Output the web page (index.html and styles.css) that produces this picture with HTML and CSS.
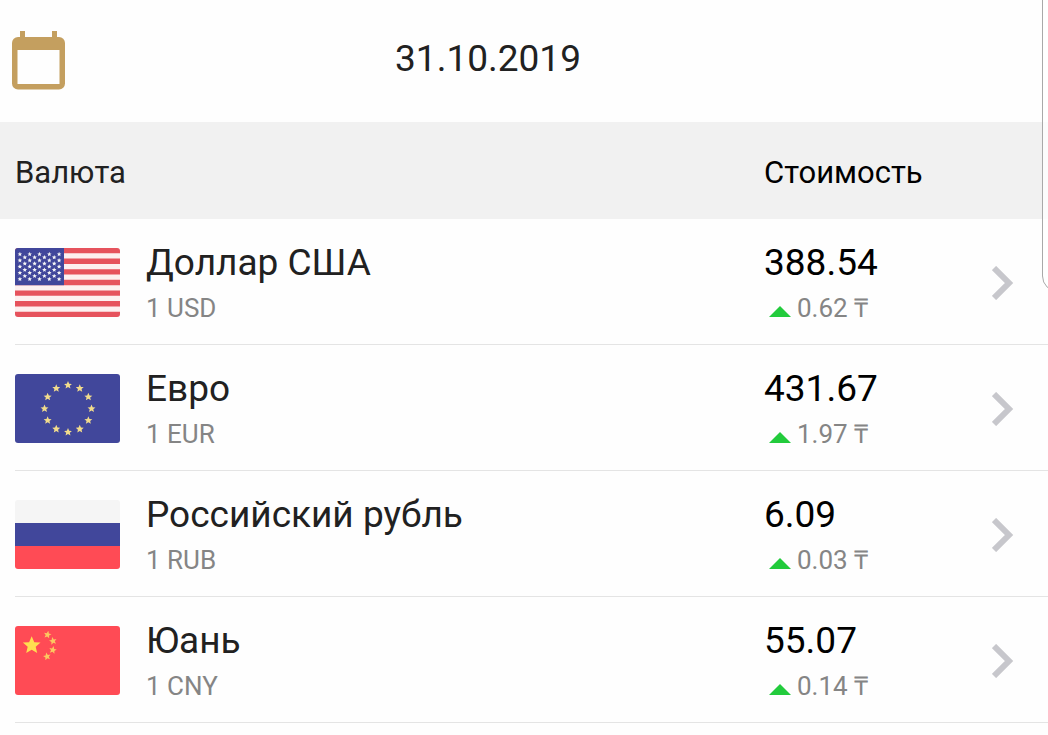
FILE: index.html
```
<!DOCTYPE html>
<html lang="ru">
<head>
    <meta charset="UTF-8">
    <meta name="viewport" content="width=device-width, initial-scale=1.0">
    <title>Курсы валют</title>
    <link rel="stylesheet" href="styles.css">
</head>
<body>
    <svg class="defs" aria-hidden="true">
        <defs>
            <path id="star" d="M0 -10 L2.8 -3.400 L9.5 -3.1 L4.300 1.4 L5.9 8.1 L0 4.500 L-5.9 8.1 L-4.300 1.4 L-9.5 -3.1 L-2.8 -3.400 Z"/>
            <path id="chevron" d="M2 2 L17 17 L2 32"/>
        </defs>
    </svg>

    <div class="app">
        <header class="top-bar">
            <button class="calendar-btn" type="button" aria-label="Выбрать дату">
                <svg width="53" height="59" viewBox="0 0 53 59">
                    <path fill="#c49f5f" fill-rule="evenodd" d="M8 0h5v6h27V0h5v6h2a6 6 0 0 1 6 6v40.500a6 6 0 0 1-6 6H6a6 6 0 0 1-6-6V12a6 6 0 0 1 6-6h2zM5.500 19v34h42V19z"/>
                </svg>
            </button>
            <h1 class="date">31.10.2019</h1>
        </header>

        <table class="rates">
            <thead>
                <tr>
                    <th class="currency" scope="col">Валюта</th>
                    <th class="cost" scope="col" colspan="2">Стоимость</th>
                </tr>
            </thead>
            <tbody>
                <tr>
                    <td class="currency">
                        <div class="currency-info">
                            <svg class="flag" viewBox="0 0 105 69" aria-hidden="true">
                                <rect width="105" height="69" fill="#fdf0f0"/>
                                <path stroke="#e6535d" stroke-width="5.300" d="M0 2.650h105M0 13.260h105M0 23.880h105M0 34.500h105M0 45.120h105M0 55.730h105M0 66.350h105"/>
                                <rect width="49" height="37.200" fill="#41479b"/>
                                <g id="us-stars" fill="#f5f5f5"></g>
                            </svg>
                            <div>
                                <div class="name">Доллар США</div>
                                <div class="code">1 USD</div>
                            </div>
                        </div>
                    </td>
                    <td class="cost">
                        <div class="value">388.54</div>
                        <div class="change"><span class="up"></span>0.62 ₸</div>
                    </td>
                    <td class="more">
                        <a href="#usd" aria-label="Доллар США"><svg width="22" height="34" viewBox="0 0 22 34"><use href="#chevron"/></svg></a>
                    </td>
                </tr>
                <tr>
                    <td class="currency">
                        <div class="currency-info">
                            <svg class="flag" viewBox="0 0 105 69" aria-hidden="true">
                                <rect width="105" height="69" fill="#41479b"/>
                                <g id="eu-stars" fill="#f2dc8c"></g>
                            </svg>
                            <div>
                                <div class="name">Евро</div>
                                <div class="code">1 EUR</div>
                            </div>
                        </div>
                    </td>
                    <td class="cost">
                        <div class="value">431.67</div>
                        <div class="change"><span class="up"></span>1.97 ₸</div>
                    </td>
                    <td class="more">
                        <a href="#eur" aria-label="Евро"><svg width="22" height="34" viewBox="0 0 22 34"><use href="#chevron"/></svg></a>
                    </td>
                </tr>
                <tr>
                    <td class="currency">
                        <div class="currency-info">
                            <svg class="flag" viewBox="0 0 105 69" aria-hidden="true">
                                <rect width="105" height="23" fill="#f5f5f5"/>
                                <rect y="23" width="105" height="23" fill="#41479b"/>
                                <rect y="46" width="105" height="23" fill="#ff4b55"/>
                            </svg>
                            <div>
                                <div class="name">Российский рубль</div>
                                <div class="code">1 RUB</div>
                            </div>
                        </div>
                    </td>
                    <td class="cost">
                        <div class="value">6.09</div>
                        <div class="change"><span class="up"></span>0.03 ₸</div>
                    </td>
                    <td class="more">
                        <a href="#rub" aria-label="Российский рубль"><svg width="22" height="34" viewBox="0 0 22 34"><use href="#chevron"/></svg></a>
                    </td>
                </tr>
                <tr>
                    <td class="currency">
                        <div class="currency-info">
                            <svg class="flag" viewBox="0 0 105 69" aria-hidden="true">
                                <rect width="105" height="69" fill="#ff4b55"/>
                                <g fill="#ffdf50">
                                    <use href="#star" transform="translate(16.700 19.500) scale(.93)"/>
                                </g>
                                <g fill="#fcc860">
                                    <use href="#star" transform="translate(32.500 8.700) rotate(12) scale(.4)"/>
                                    <use href="#star" transform="translate(38 15) rotate(-12) scale(.4)"/>
                                    <use href="#star" transform="translate(37.800 24) rotate(12) scale(.4)"/>
                                    <use href="#star" transform="translate(32 30.500) rotate(-12) scale(.4)"/>
                                </g>
                            </svg>
                            <div>
                                <div class="name">Юань</div>
                                <div class="code">1 CNY</div>
                            </div>
                        </div>
                    </td>
                    <td class="cost">
                        <div class="value">55.07</div>
                        <div class="change"><span class="up"></span>0.14 ₸</div>
                    </td>
                    <td class="more">
                        <a href="#cny" aria-label="Юань"><svg width="22" height="34" viewBox="0 0 22 34"><use href="#chevron"/></svg></a>
                    </td>
                </tr>
            </tbody>
        </table>

        <div class="edge-panel"></div>
    </div>

    <script>
        function addStar(group, x, y, scale) {
            const star = document.createElementNS('http://www.w3.org/2000/svg', 'use');
            star.setAttribute('href', '#star');
            star.setAttribute('transform', `translate(${x} ${y}) scale(${scale})`);
            group.appendChild(star);
        }

        // USA: rows of 5 and 4 stars in turn
        const usStars = document.getElementById('us-stars');
        for (let row = 0; row < 9; row++) {
            const odd = row % 2;
            for (let i = 0; i < 5 - odd; i++) {
                addStar(usStars, 4.9 + odd * 4.9 + i * 9.8, 6.2 + row * 3.12, 0.24);
            }
        }

        // EU: 12 stars in a circle
        const euStars = document.getElementById('eu-stars');
        for (let i = 0; i < 12; i++) {
            const angle = i * Math.PI / 6;
            addStar(euStars, 53 + 23.5 * Math.sin(angle), 34.7 - 23.5 * Math.cos(angle), 0.42);
        }
    </script>
</body>
</html>
```
FILE: styles.css
```
body {
    font-family: Roboto, Arial, sans-serif;
    margin: 0;
    background-color: #fefefe;
    color: #212121;
}
.defs {
    display: block;
    width: 0;
    height: 0;
}
.app {
    position: relative;
    overflow: hidden;
    min-height: 100vh;
}
.top-bar {
    display: flex;
    align-items: center;
    padding: 31px 137px 32px 12px;
}
.calendar-btn {
    padding: 0;
    border: none;
    background: none;
    cursor: pointer;
}
.calendar-btn svg {
    display: block;
}
.date {
    flex: 1;
    margin: 0;
    font-size: 37px;
    font-weight: 400;
    line-height: 56px;
    padding-bottom: 3px;
    text-align: center;
}
.rates {
    width: 100%;
    border-spacing: 0;
}
.rates th {
    padding: 28px 0 23px;
    background-color: #f1f1f1;
    font-size: 31px;
    font-weight: 400;
    line-height: 46px;
    text-align: left;
}
.rates td {
    padding: 21px 0 14px;
    background: linear-gradient(#e4e4e4, #e4e4e4) no-repeat 0 100% / 100% 1px;
}
.rates .currency {
    padding-left: 15px;
}
/* the divider starts under the flag, not at the edge */
.rates td.currency {
    background-position: 15px 100%;
}
.rates .cost {
    width: 220px;
    color: #000;
}
.rates .more {
    width: 64px;
}
.currency-info {
    display: flex;
    align-items: center;
    gap: 26px;
}
.flag {
    width: 105px;
    height: 69px;
    border-radius: 3px;
    margin-bottom: 6px;
}
.name,
.value {
    font-size: 37px;
    line-height: 46px;
}
.code,
.change {
    color: #858585;
    font-size: 26px;
    line-height: 45px;
}
.change {
    display: flex;
    align-items: center;
}
.up {
    margin: 5px 6px 0 5px;
    border: solid transparent;
    border-width: 0 11px 11px;
    border-bottom-color: #22cb3c;
}
.more a,
.more svg {
    display: block;
}
.more svg {
    margin-left: 8px;
    margin-bottom: 6px;
    fill: none;
    stroke: #c7c7cc;
    stroke-width: 6px;
}
/* handle of the side panel, mostly off screen */
.edge-panel {
    position: absolute;
    top: -20px;
    right: -34px;
    width: 40px;
    height: 312px;
    box-sizing: border-box;
    border: 1px solid #a9a9a9;
    border-radius: 16px;
    background-color: rgba(255, 255, 255, 0.8);
}
```
